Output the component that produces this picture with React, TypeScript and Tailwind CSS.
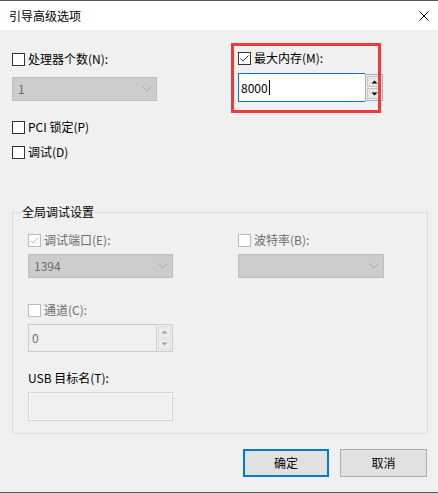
import React from "react";

function Box({ checked, disabled }: { checked?: boolean; disabled?: boolean }) {
  return (
    <span
      className={
        disabled
          ? "w-[13px] h-[13px] border border-[#bcbcbc] bg-white flex items-center justify-center shrink-0"
          : "w-[13px] h-[13px] border border-[#333333] bg-white flex items-center justify-center shrink-0"
      }
    >
      {checked && (
        <svg width="11" height="11" viewBox="0 0 11 11">
          <polyline
            points="1.5,5.5 4,8 9.5,2.5"
            fill="none"
            stroke={disabled ? "#bcbcbc" : "#333333"}
            strokeWidth="1"
          />
        </svg>
      )}
    </span>
  );
}

function CheckRow({
  label,
  checked,
  disabled,
  className,
}: {
  label: string;
  checked?: boolean;
  disabled?: boolean;
  className: string;
}) {
  return (
    <div className={className + " h-[16px] flex items-center gap-[3px]"}>
      <Box checked={checked} disabled={disabled} />
      <span className={disabled ? "text-[#6d6d6d]" : "text-black"}>{label}</span>
    </div>
  );
}

function Chevron() {
  return (
    <svg width="10" height="6" viewBox="0 0 10 6">
      <polyline points="0.5,0.5 5,5 9.5,0.5" fill="none" stroke="#a8a8a8" strokeWidth="1" />
    </svg>
  );
}

function Dropdown({ value, width, className }: { value: string; width: string; className: string }) {
  return (
    <div
      className={
        className +
        " " +
        width +
        " h-[24px] bg-[#cccccc] border border-[#bfbfbf] flex items-center justify-between pl-[5px] pr-[4px] text-[#6d6d6d]"
      }
    >
      <span>{value}</span>
      <Chevron />
    </div>
  );
}

function Arrow({ up, color }: { up?: boolean; color: string }) {
  return (
    <svg width="7" height="4" viewBox="0 0 7 4">
      {up ? <polygon points="0.5,3.5 3.5,0.5 6.5,3.5" fill={color} /> : <polygon points="0.5,0.5 6.5,0.5 3.5,3.5" fill={color} />}
    </svg>
  );
}

export default function App() {
  return (
    <div className="relative w-[438px] h-[493px] bg-[#f0f0f0] border-t border-b border-[#5a5a5a] flex flex-col text-[12px] leading-[16px] font-['Noto_Sans_CJK_SC','Noto_Sans',sans-serif] text-black overflow-hidden">
      {/* Title bar */}
      <div className="h-[29px] bg-white flex items-center justify-between pl-[9px] pr-[9px] shrink-0">
        <span>引导高级选项</span>
        <svg width="10" height="10" viewBox="0 0 10 10" className="mt-[1px]">
          <line x1="0.5" y1="0.5" x2="9.5" y2="9.5" stroke="#000" strokeWidth="1" />
          <line x1="9.5" y1="0.5" x2="0.5" y2="9.5" stroke="#000" strokeWidth="1" />
        </svg>
      </div>

      {/* Top section */}
      <div className="flex">
        <div className="w-[238px] pl-[12px] flex flex-col shrink-0">
          <CheckRow className="mt-[21px]" label="处理器个数(N):" />
          <Dropdown className="mt-[10px]" width="w-[145px]" value="1" />
          <CheckRow className="mt-[18px]" label="PCI 锁定(P)" />
          <CheckRow className="mt-[9px]" label="调试(D)" />
        </div>
        <div className="flex flex-col">
          <CheckRow className="mt-[20px]" label="最大内存(M):" checked />
          <div className="mt-[7px] flex">
            <div className="w-[127px] h-[29px] border border-[#0078d7] border-r-0 bg-white flex items-center pl-[2px]">
              <span>8000</span>
              <span className="w-[1px] h-[15px] bg-black ml-[1px]" />
            </div>
            <div className="w-[18px] h-[27px] mt-[1px] border border-[#acacac] bg-[#f0f0f0] flex flex-col p-[1px] gap-[1px]">
              <div className="flex-1 border border-[#c4c4c4] bg-[#e6e6e6] flex items-center justify-center">
                <Arrow up color="#000" />
              </div>
              <div className="flex-1 border border-[#c4c4c4] bg-[#e6e6e6] flex items-center justify-center">
                <Arrow color="#000" />
              </div>
            </div>
          </div>
        </div>
      </div>

      {/* Group box */}
      <div className="relative mt-[52px] ml-[12px] w-[416px] h-[222px] border border-[#dcdcdc] pt-[19px] pl-[15px]">
        <span className="absolute left-[8px] top-[-9px] px-[1px] bg-[#f0f0f0]">全局调试设置</span>
        <div className="flex">
          <div className="w-[210px] flex flex-col shrink-0">
            <CheckRow className="" label="调试端口(E):" checked disabled />
            <Dropdown className="mt-[6px]" width="w-[145px]" value="1394" />
            <CheckRow className="mt-[24px]" label="通道(C):" disabled />
            <div className="mt-[6px] flex">
              <div className="w-[128px] h-[28px] border border-[#cccccc] border-r-0 bg-[#f0f0f0] flex items-center pl-[3px] text-[#6d6d6d]">
                0
              </div>
              <div className="w-[17px] h-[28px] border border-[#cccccc] bg-[#f0f0f0] flex flex-col p-[1px] gap-[1px]">
                <div className="flex-1 border border-[#dcdcdc] bg-[#ececec] flex items-center justify-center">
                  <Arrow up color="#a0a0a0" />
                </div>
                <div className="flex-1 border border-[#dcdcdc] bg-[#ececec] flex items-center justify-center">
                  <Arrow color="#a0a0a0" />
                </div>
              </div>
            </div>
            <div className="mt-[18px] h-[16px] flex items-center">USB 目标名(T):</div>
            <div className="mt-[6px] w-[145px] h-[29px] border border-[#d4d4d4] bg-[#f0f0f0] shadow-[inset_0_0_0_1px_#fafafa]" />
          </div>
          <div className="flex flex-col">
            <CheckRow className="" label="波特率(B):" disabled />
            <Dropdown className="mt-[6px]" width="w-[146px]" value="" />
          </div>
        </div>
      </div>

      {/* Buttons */}
      <div className="mt-[15px] flex justify-end gap-[11px] pr-[11px]">
        <div className="w-[86px] h-[28px] border-2 border-[#0078d7] bg-[#e1e1e1] flex items-center justify-center">
          确定
        </div>
        <div className="w-[87px] h-[28px] border border-[#adadad] bg-[#e1e1e1] flex items-center justify-center">
          取消
        </div>
      </div>

      {/* Red annotation overlay */}
      <div className="absolute left-[231px] top-[42px] w-[150px] h-[70px] border-[3px] border-[#f03a3a] pointer-events-none" />
    </div>
  );
}
